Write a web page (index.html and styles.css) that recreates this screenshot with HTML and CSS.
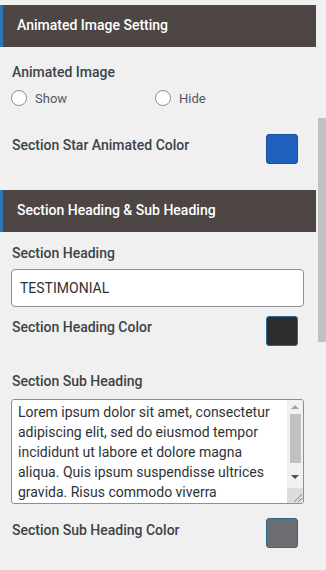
FILE: index.html
```html
<!DOCTYPE html>
<html lang="en">
<head>
<meta charset="utf-8">
<title>Settings</title>
<link rel="stylesheet" href="styles.css">
</head>
<body>
<div class="page">
  <div class="panel">
    <div class="section-head first">Animated Image Setting</div>

    <div class="field-label lbl-animated">Animated Image</div>
    <div class="radio-row">
      <label class="radio"><span class="circle"></span>Show</label>
      <label class="radio"><span class="circle"></span>Hide</label>
    </div>

    <div class="color-row row-star">
      <div class="field-label">Section Star Animated Color</div>
      <span class="swatch sw-blue"></span>
    </div>

    <div class="section-head second">Section Heading &amp; Sub Heading</div>

    <div class="field-label lbl-heading">Section Heading</div>
    <div class="text-input">TESTIMONIAL</div>

    <div class="color-row row-heading">
      <div class="field-label">Section Heading Color</div>
      <span class="swatch sw-dark"></span>
    </div>

    <div class="field-label lbl-sub">Section Sub Heading</div>
    <div class="textarea-box">
      <div class="textarea-text">Lorem ipsum dolor sit amet, consectetur adipiscing elit, sed do eiusmod tempor incididunt ut labore et dolore magna aliqua. Quis ipsum suspendisse ultrices gravida. Risus commodo viverra</div>
      <div class="ta-scroll">
        <span class="arrow up"></span>
        <span class="ta-thumb"></span>
        <span class="arrow down"></span>
        <span class="grip">
          <svg width="14" height="14" viewBox="0 0 14 14"><path d="M5 13 L13 5 M9 13 L13 9" stroke="#8a8a8a" stroke-width="1" fill="none"/></svg>
        </span>
      </div>
    </div>

    <div class="color-row row-sub">
      <div class="field-label">Section Sub Heading Color</div>
      <span class="swatch sw-gray"></span>
    </div>
  </div>
  <div class="page-scroll"><span class="page-thumb"></span></div>
</div>
</body>
</html>
```

FILE: styles.css
```css
html, body {
  margin: 0;
  padding: 0;
  background: #f0f0f0;
  font-family: Roboto, "Liberation Sans", Arial, sans-serif;
}

.page {
  display: flex;
  width: 326px;
  height: 570px;
  overflow: hidden;
}

.panel {
  width: 316px;
  padding-top: 5px;
}

.section-head {
  height: 42px;
  box-sizing: border-box;
  background: #4d4644;
  border-left: 3px solid #2b78b4;
  color: #ffffff;
  font-size: 14px;
  font-weight: 500;
  line-height: 41px;
  padding-left: 14px;
}

.section-head.second {
  margin-top: 26px;
}

.field-label {
  color: #3c434a;
  font-size: 14px;
  font-weight: 500;
  line-height: 20px;
  padding-left: 12px;
}

.lbl-animated { margin-top: 15px; }
.lbl-heading { margin-top: 11px; }
.lbl-sub { margin-top: 25px; }

.radio-row {
  display: flex;
  margin-top: 6px;
  height: 20px;
  padding-left: 11px;
}

.radio {
  display: flex;
  align-items: center;
  gap: 8px;
  width: 144px;
  color: #50575e;
  font-size: 13px;
}

.circle {
  width: 14px;
  height: 14px;
  border: 1px solid #8c8f94;
  border-radius: 50%;
  background: #ffffff;
}

.color-row {
  display: flex;
  justify-content: space-between;
  align-items: flex-start;
  padding-right: 18px;
}

.color-row .field-label {
  margin-top: 1px;
}

.row-star { margin-top: 26px; }
.row-heading { margin-top: 9px; }
.row-sub { margin-top: 14px; }
.row-sub .field-label { margin-top: 2px; }

.swatch {
  display: block;
  width: 32px;
  height: 30px;
  box-sizing: border-box;
  border-radius: 3px;
  border: 1px solid #2a6a90;
}

.sw-blue { background: #1f5fbd; border-color: #1b4f9a; }
.sw-dark { background: #2c2c2c; }
.sw-gray { background: #6b6d70; }

.text-input {
  margin: 6px 12px 0 11px;
  height: 38px;
  box-sizing: border-box;
  border: 1px solid #8c8f94;
  border-radius: 4px;
  background: #ffffff;
  color: #2c3338;
  font-size: 14px;
  line-height: 36px;
  padding-left: 8px;
}

.textarea-box {
  margin: 8px 12px 0 11px;
  height: 105px;
  box-sizing: border-box;
  border: 1px solid #8c8f94;
  border-radius: 3px;
  background: #ffffff;
  display: flex;
  overflow: hidden;
}

.textarea-text {
  flex: 1;
  padding: 2px 4px 0 6px;
  color: #2c3338;
  font-size: 14px;
  line-height: 20px;
}

.ta-scroll {
  width: 16px;
  background: #f1f1f1;
  display: flex;
  flex-direction: column;
  align-items: center;
}

.arrow {
  width: 0;
  height: 0;
  border-left: 4px solid transparent;
  border-right: 4px solid transparent;
}

.arrow.up {
  margin-top: 5px;
  border-bottom: 4px solid #a3a3a3;
}

.arrow.down {
  margin-top: 12px;
  border-top: 4px solid #505050;
}

.ta-thumb {
  margin-top: 5px;
  width: 11px;
  height: 49px;
  background: #c1c1c1;
}

.grip {
  margin-top: auto;
  width: 16px;
  height: 15px;
  background: #dcdcdc;
  display: flex;
  justify-content: flex-end;
  align-items: flex-end;
}

.grip svg {
  display: block;
}

.page-scroll {
  width: 10px;
}

.page-thumb {
  display: block;
  margin: 118px 0 0 2px;
  width: 8px;
  height: 224px;
  background: #c1c1c1;
}
```
